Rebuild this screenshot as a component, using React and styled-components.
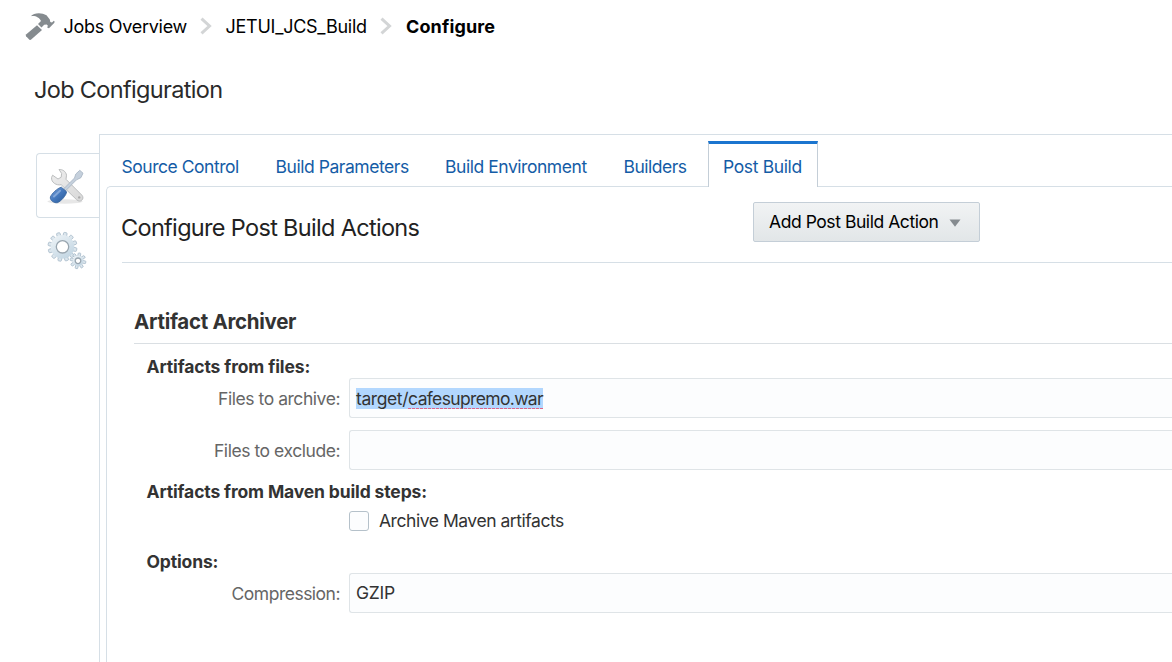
import React from 'react';
import styled, { createGlobalStyle, css } from 'styled-components';

const Global = createGlobalStyle`
  * { box-sizing: border-box; }
  html, body { margin: 0; background: #fff; overflow: hidden; }
  body { font-family: Inter, "Liberation Sans", sans-serif; font-size: 17.5px; color: #333; }
  h1, h2, h3, h4 { margin: 0; }
`;

const Page = styled.div`
  display: flex;
  flex-direction: column;
  width: 100%;
  height: 662px;
  overflow: hidden;
`;

const Breadcrumbs = styled.nav`
  display: flex;
  align-items: center;
  height: 52px;
  padding-left: 24px;
  color: #000;
  font-size: 18px;
`;

const Label = styled.span`
  white-space: nowrap;
  letter-spacing: ${(p) => p.$track || 0}px;
`;

const Crumb = styled(Label)`
  width: ${(p) => p.$w}px;
  padding-top: 1px;
  font-weight: ${(p) => (p.$current ? 700 : 400)};
`;

const HammerIcon = styled.svg`
  width: 32px;
  height: 32px;
  margin-right: 7.5px;
  flex: none;
`;

const Chevron = styled.svg`
  width: 14px;
  height: 18px;
  margin: 0 13px 0 12px;
  flex: none;
`;

const PageTitle = styled.h1`
  height: 82px;
  padding-left: 34px;
  font-size: 23.5px;
  font-weight: 380;
  line-height: 76px;
  letter-spacing: -0.66px;
  color: #2a2a2a;
`;

const Body = styled.div`
  display: flex;
  flex: 1;
`;

const Rail = styled.aside`
  display: flex;
  flex-direction: column;
  width: 100px;
  padding: 19px 0 0 36px;
`;

const RailButton = styled.div`
  display: flex;
  align-items: center;
  justify-content: center;
  height: 65px;
  padding: ${(p) => (p.$active ? '2px 1px 0 0' : '1px 3px 0 0')};
  border: 1px solid ${(p) => (p.$active ? '#d6dfe6' : 'transparent')};
  border-right: 0;
  border-radius: 4px 0 0 4px;
  z-index: 1;
  svg { width: 44px; height: 44px; }
`;

const Main = styled.main`
  flex: 1;
  min-width: 0;
  margin-left: -1px;
  padding: 6px 0 0 7px;
  border: solid #d6dfe6;
  border-width: 1px 0 0 1px;
`;

const Tabs = styled.div`
  display: flex;
  height: 45px;
  color: #145ca6;
`;

const Tab = styled.div`
  width: ${(p) => p.$w}px;
  padding-left: 14.5px;
  line-height: 52px;
  ${(p) => p.$active && css`
    height: 46px;
    padding-left: 14px;
    line-height: 46px;
    background: #fff;
    border: solid #c4ced7;
    border-width: 3px 1px 0;
    border-top-color: #1b75cf;
    z-index: 1;
  `}
`;

const Panel = styled.section`
  height: 476px;
  margin-left: -1px;
  padding-left: 15px;
  border: solid #d6dfe6;
  border-width: 1px 0 0 1px;
  border-radius: 5px 0 0 0;
`;

const PanelHeader = styled.header`
  display: flex;
  align-items: flex-start;
  height: 76px;
  padding-top: 15px;
  border-bottom: 1px solid #d6dfe6;
`;

const PanelTitle = styled.h2`
  width: 632px;
  margin-left: -1px;
  font-size: 23.5px;
  font-weight: 380;
  line-height: 51px;
  letter-spacing: -0.68px;
  color: #222;
`;

const ActionButton = styled.button`
  display: flex;
  align-items: center;
  justify-content: space-between;
  width: 227px;
  height: 40px;
  padding: 0 18px 1px 15px;
  border: 1px solid #c4ced7;
  border-radius: 2px;
  background: linear-gradient(#f1f3f4, #e2e6e8);
  color: #000;
  font: inherit;
`;

const Caret = styled.svg`
  width: 12px;
  height: 8px;
  margin-top: 2px;
`;

const Group = styled.div`
  padding: 37px 0 0 12px;
`;

const GroupTitle = styled.h3`
  height: 44px;
  border-bottom: 1px solid #dadfe3;
  font-size: 20.5px;
  font-weight: 700;
  line-height: 44px;
  letter-spacing: -0.3px;
`;

const Fields = styled.div`
  padding-left: 13px;
`;

const SubTitle = styled.h4`
  height: ${(p) => p.$h}px;
  padding-top: ${(p) => p.$top}px;
  margin-left: -0.5px;
  font-size: 17.5px;
  font-weight: 700;
  line-height: 22px;
`;

const Row = styled.div`
  display: flex;
  align-items: center;
  height: 40px;
  margin-bottom: ${(p) => p.$gap || 0}px;
`;

const FieldLabel = styled.label`
  width: 193px;
  padding-top: 1px;
  text-align: right;
  color: #666;
`;

const Input = styled.div`
  display: flex;
  align-items: center;
  flex: 1;
  height: 40px;
  margin-left: 9px;
  padding: 0 0 ${(p) => p.$lift || 0}px 6px;
  border: 1px solid #dfe4e7;
  border-right: 0;
  border-radius: 3px 0 0 3px;
  background: #fcfdfe;
`;

const Selected = styled.span`
  display: flex;
  width: 187px;
  height: 21px;
  line-height: 21px;
  background: #b2d7fe;
`;

const Misspelled = styled(Label)`
  flex: 1;
  height: 21px;
  background: repeating-linear-gradient(90deg, #dd6688 0 3px, transparent 3px 4px) 0 100% / 100% 1px no-repeat;
`;

const CheckRow = styled.div`
  display: flex;
  align-items: center;
  height: 40px;
  padding-left: 202px;
  line-height: 20px;
`;

const Checkbox = styled.span`
  width: 20px;
  height: 20px;
  margin-right: 10px;
  border: 1px solid #b5c1ca;
  border-radius: 3px;
  background: #fcfdfe;
`;

const Hammer = () => (
  <HammerIcon viewBox="0 0 32 32">
    <path d="M13 16 18 20.8 7.2 30.4Q6.2 31.2 5.2 30.2L2.1 27.1Q1.3 26 2.3 25Z" transform="translate(0 -.8)" fill="#858b8f" />
    <path d="M6.8 6.2C9.6 2.7 17.5 2 22.5 5.3L25.8 9.5 26.3 12 28 12.5 29.8 10.8 30.5 11.3 30.4 12.8 25 18.2 23.3 17.7 23.8 15.4 22.7 14.6 20.2 14.8 17.5 17.5 14 14 17 11C15.5 7.4 11 5.2 6.8 6.2Z" fill="#858b8f" />
    <path d="M13.6 14.8 18.6 19.6" stroke="#fff" strokeWidth=".7" />
  </HammerIcon>
);

const Separator = () => (
  <Chevron viewBox="0 0 14 18">
    <path d="M2.5 1.7 10.5 9 2.5 16.3" fill="none" stroke="#d3d5d6" strokeWidth="3" />
  </Chevron>
);

const ToolsIcon = () => (
  <svg viewBox="0 0 44 44">
    <defs>
      <linearGradient id="steel" x1="0" y1="0" x2="1" y2="1">
        <stop offset="0" stopColor="#eeeeee" /><stop offset="1" stopColor="#d8d8d8" />
      </linearGradient>
      <linearGradient id="grip" x1="0" y1="0" x2="1" y2="1">
        <stop offset="0" stopColor="#87a9dc" /><stop offset=".45" stopColor="#477bc0" /><stop offset="1" stopColor="#275896" />
      </linearGradient>
    </defs>
    <ellipse cx="19" cy="36.5" rx="17.5" ry="2.2" fill="#e7e7e7" />
    <path d="M13 4.5C16.5 4.2 20 6.5 20.5 10.2L20 14.3 36 30.3C39 34 34.2 38.2 30.7 34.8L15.2 19.7C10.4 20.8 4.9 17.3 5.6 12.4L6.6 10.2 12 14 15.2 12.2 15.6 8.4Z" fill="url(#steel)" stroke="#bcbebf" strokeWidth="1" />
    <circle cx="33.2" cy="32.4" r="1.2" fill="#aaa" />
    <path d="M17.5 24 28.5 13 29.8 9 33.8 5.3 37 8.2 34.9 12.7 30.5 14.8 19.4 26Z" fill="#c5d0dc" stroke="#a5b2c2" strokeWidth=".8" />
    <path d="M15.4 22.2 20.6 26.8C20.4 30.5 14.6 36.6 11.4 37.7 8.2 38.4 3.6 35.2 4.4 32 5.4 29 11.4 23 15.4 22.2Z" fill="url(#grip)" stroke="#315f9b" strokeWidth=".8" />
    <path d="M8 31.5 14 25.7" stroke="#a6c1e6" strokeWidth="2" strokeLinecap="round" opacity=".6" />
  </svg>
);

const Gear = ({ cx, cy, r, teeth, tooth, hole }) => (
  <g transform={`translate(${cx} ${cy})`}>
    {Array.from({ length: teeth }, (_, i) => (
      <rect key={i} x={-tooth / 2} y={-r - 2.7} width={tooth} height={4.5} rx={tooth * 0.25}
        transform={`rotate(${(360 / teeth) * i + 12})`} fill="#dce6ed" stroke="#a9bccb" strokeWidth=".8" />
    ))}
    <circle r={r} fill="url(#gearFill)" />
    <circle r={hole} fill="#fff" stroke="#98a5af" strokeWidth="1.3" />
  </g>
);

const GearsIcon = () => (
  <svg viewBox="0 0 44 44">
    <defs>
      <linearGradient id="gearFill" x1="0" y1="0" x2=".7" y2="1">
        <stop offset="0" stopColor="#f0f5f8" /><stop offset="1" stopColor="#c3d6e3" />
      </linearGradient>
    </defs>
    <Gear cx={17.5} cy={17.8} r={11.8} teeth={12} tooth={3.6} hole={6.2} />
    <Gear cx={33} cy={31.8} r={5.2} teeth={8} tooth={2.6} hole={2.8} />
  </svg>
);

const tabs = [
  { name: 'Source Control', w: 154, track: -0.47 },
  { name: 'Build Parameters', w: 169.5, track: -0.45 },
  { name: 'Build Environment', w: 178.5, track: -0.45 },
  { name: 'Builders', w: 99, track: -0.5 },
  { name: 'Post Build', w: 110, track: -0.36, active: true },
];

export default function App() {
  return (
    <>
      <Global />
      <Page>
        <Breadcrumbs>
          <Hammer />
          <Crumb $w={123} $track={-0.28}>Jobs Overview</Crumb>
          <Separator />
          <Crumb $w={141.5} $track={-0.25}>JETUI_JCS_Build</Crumb>
          <Separator />
          <Crumb $w={90} $track={0.13} $current>Configure</Crumb>
        </Breadcrumbs>
        <PageTitle>Job Configuration</PageTitle>
        <Body>
          <Rail>
            <RailButton $active><ToolsIcon /></RailButton>
            <RailButton><GearsIcon /></RailButton>
          </Rail>
          <Main>
            <Tabs>
              {tabs.map((t) => (
                <Tab key={t.name} $w={t.w} $active={t.active}>
                  <Label $track={t.track}>{t.name}</Label>
                </Tab>
              ))}
            </Tabs>
            <Panel>
              <PanelHeader>
                <PanelTitle>Configure Post Build Actions</PanelTitle>
                <ActionButton>
                  <Label $track={-0.44}>Add Post Build Action</Label>
                  <Caret viewBox="0 0 12 8"><path d="M.5.5h11L6 7.7Z" fill="#858b8f" /></Caret>
                </ActionButton>
              </PanelHeader>
              <Group>
                <GroupTitle>Artifact Archiver</GroupTitle>
                <Fields>
                  <SubTitle $h={34} $top={12}><Label $track={-0.12}>Artifacts from files:</Label></SubTitle>
                  <Row $gap={12}>
                    <FieldLabel><Label $track={-0.45}>Files to archive:</Label></FieldLabel>
                    <Input>
                      <Selected>
                        <Label $track={-0.4}>target/</Label>
                        <Misspelled $track={-0.65}>cafesupremo.war</Misspelled>
                      </Selected>
                    </Input>
                  </Row>
                  <Row>
                    <FieldLabel><Label $track={-0.45}>Files to exclude:</Label></FieldLabel>
                    <Input />
                  </Row>
                  <SubTitle $h={31} $top={11}><Label $track={-0.14}>Artifacts from Maven build steps:</Label></SubTitle>
                  <CheckRow>
                    <Checkbox />
                    <Label $track={-0.46}>Archive Maven artifacts</Label>
                  </CheckRow>
                  <SubTitle $h={32} $top={10}><Label $track={-0.15}>Options:</Label></SubTitle>
                  <Row>
                    <FieldLabel><Label $track={-0.5}>Compression:</Label></FieldLabel>
                    <Input $lift={2}><Label $track={-0.25}>GZIP</Label></Input>
                  </Row>
                </Fields>
              </Group>
            </Panel>
          </Main>
        </Body>
      </Page>
    </>
  );
}
